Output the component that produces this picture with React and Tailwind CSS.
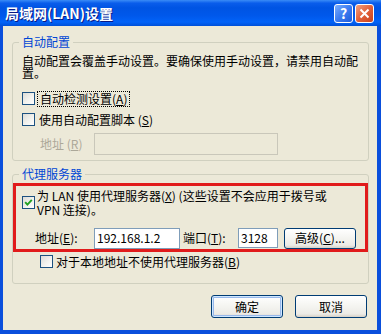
import React from 'react';

// XP 风格复选框
function CheckBox({ checked = false, className = '' }) {
  return (
    <span
      className={`flex h-[13px] w-[13px] shrink-0 items-center justify-center border border-[#1C5180] bg-[linear-gradient(135deg,#DCDCD7_0%,#F2F2EE_55%,#FFFFFF_100%)] ${className}`}
    >
      {checked && (
        <svg width="9" height="9" viewBox="0 0 9 9">
          <path d="M1.2 4.2 L3.4 6.6 L7.8 1.8" fill="none" stroke="#21A121" strokeWidth="1.9" />
        </svg>
      )}
    </span>
  );
}

// 带下划线的快捷键
const Key = ({ k }) => (
  <>
    (<span className="underline">{k}</span>)
  </>
);

function XpButton({ children, isDefault = false }) {
  return (
    <button
      className={`flex h-[23px] w-[72px] items-center justify-center rounded-[3px] border border-[#003C74] bg-[linear-gradient(180deg,#FFFFFF_0%,#F4F4F0_50%,#ECEBE6_85%,#D6D0C5_100%)] text-[12px] leading-[14px] text-black ${
        isDefault ? 'shadow-[inset_0_0_0_1px_#CEE7FF,inset_0_0_0_2px_#98B8EA]' : ''
      }`}
    >
      {children}
    </button>
  );
}

export default function App() {
  return (
    <div className="flex h-[334px] w-[381px] flex-col bg-[#0A4FDC] font-['Noto_Sans_CJK_SC',sans-serif] text-[12px] text-black">
      {/* 标题栏 */}
      <div className="flex h-[26px] shrink-0 items-center justify-between bg-[linear-gradient(180deg,#3A8CF6_0%,#0A5DEB_12%,#0054E3_30%,#0058EB_60%,#0263F8_85%,#0050D8_100%)] pl-[5px] pr-[7px]">
        <span className="text-[14px] font-bold leading-[16px] text-white [text-shadow:1px_1px_#0A1883]">
          局域网(LAN)设置
        </span>
        <div className="flex gap-[2px]">
          <div className="flex h-[19px] w-[19px] items-center justify-center rounded-[3px] border border-white bg-[linear-gradient(135deg,#7AAEFF_0%,#3D7CF0_50%,#1E5CDB_100%)] text-[14px] font-bold leading-none text-white">
            ?
          </div>
          <div className="flex h-[19px] w-[19px] items-center justify-center rounded-[3px] border border-white bg-[linear-gradient(135deg,#F2A07F_0%,#E2613A_50%,#C9421D_100%)]">
            <svg width="11" height="11" viewBox="0 0 11 11">
              <path d="M1.5 1.5 L9.5 9.5 M9.5 1.5 L1.5 9.5" stroke="white" strokeWidth="2" />
            </svg>
          </div>
        </div>
      </div>

      {/* 对话框主体 */}
      <div className="mb-[4px] ml-[3px] mr-[4px] flex flex-1 flex-col bg-[#ECE9D8] pl-[9px] pr-[8px] pt-[9px]">
        <fieldset className="rounded-[3px] border border-[#D0D0BF] pb-[5px] pl-[9px] pr-[8px] pt-[6px]">
          <legend className="-ml-[3px] px-[3px] leading-[14px] text-[#0046D5]">自动配置</legend>
          <p className="leading-[12px]">
            自动配置会覆盖手动设置。要确保使用手动设置，请禁用自动配
            <br />
            置。
          </p>
          <div className="mt-[13px] flex h-[13px] items-center">
            <CheckBox />
            <span className="ml-[2px] border border-dotted border-black px-[2px] leading-[14px]">
              自动检测设置<Key k="A" />
            </span>
          </div>
          <div className="mt-[8px] flex h-[13px] items-center">
            <CheckBox />
            <span className="ml-[4px] leading-[14px]">
              使用自动配置脚本 <Key k="S" />
            </span>
          </div>
          <div className="mt-[7px] flex h-[22px] items-center">
            <span className="ml-[18px] w-[54px] text-[#ACA899]">
              地址 <Key k="R" />
            </span>
            <div className="h-[22px] w-[184px] border border-[#C9C7BA]" />
          </div>
        </fieldset>

        <fieldset className="mt-[6px] rounded-[3px] border border-[#D0D0BF] pb-[15px] pt-[2px]">
          <legend className="ml-[6px] px-[3px] leading-[14px] text-[#0046D5]">代理服务器</legend>
          <div className="border-[3px] border-[#E11B1B] pt-[3px]">
            <div className="flex items-start">
              <CheckBox checked className="ml-[6px] mt-[7px]" />
              <p className="ml-[2px] leading-[14px]">
                为 LAN 使用代理服务器<Key k="X" /> (这些设置不会应用于拨号或
                <br />
                VPN 连接)。
              </p>
            </div>
            <div className="mt-[10px] flex h-[22px] items-center">
              <span className="ml-[19px] w-[59px]">
                地址<Key k="E" />:
              </span>
              <div className="flex h-[21px] w-[86px] items-center border border-[#7F9DB9] bg-white pl-[2px]">
                192.168.1.2
              </div>
              <span className="ml-[3px] w-[55px]">
                端口<Key k="T" />:
              </span>
              <div className="flex h-[20px] w-[40px] items-center border border-[#7F9DB9] bg-white pl-[2px]">
                3128
              </div>
              <button className="ml-[6px] flex h-[21px] w-[72px] items-center justify-center rounded-[3px] border border-[#003C74] bg-[linear-gradient(180deg,#FFFFFF_0%,#F4F4F0_50%,#ECEBE6_85%,#D6D0C5_100%)] text-[12px] leading-[14px]">
                高级<Key k="C" />...
              </button>
            </div>
          </div>
          <div className="mt-[3px] flex h-[13px] items-center pl-[27px]">
            <CheckBox />
            <span className="ml-[3px] leading-[14px]">
              对于本地地址不使用代理服务器<Key k="B" />
            </span>
          </div>
        </fieldset>

        <div className="mt-[11px] flex justify-end gap-[12px] pr-[2px]">
          <XpButton isDefault>确定</XpButton>
          <XpButton>取消</XpButton>
        </div>
      </div>
    </div>
  );
}
